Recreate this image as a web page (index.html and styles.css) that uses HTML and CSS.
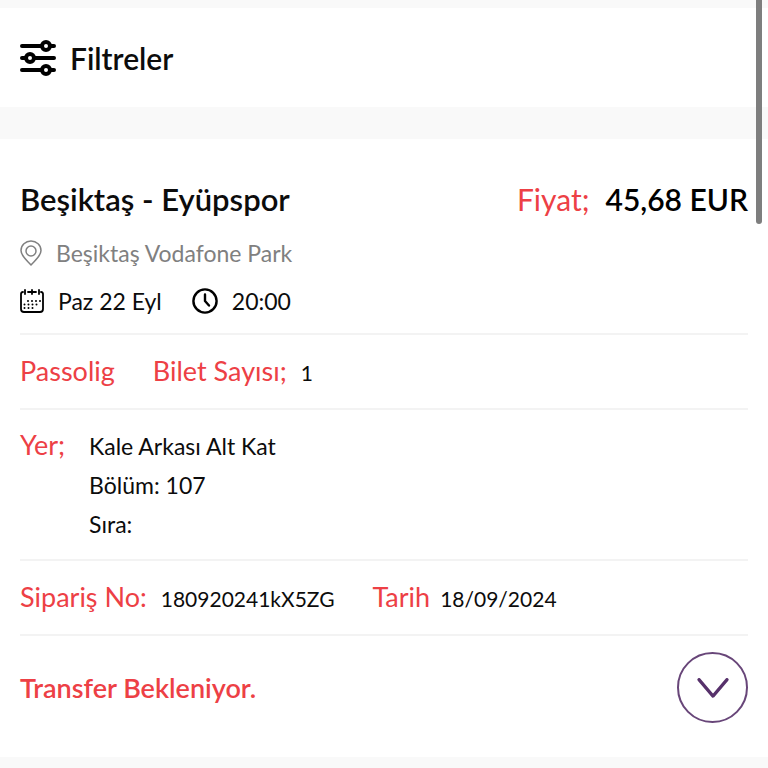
FILE: index.html
```html
<!DOCTYPE html>
<html lang="tr">
<head>
  <meta charset="utf-8">
  <meta name="viewport" content="width=device-width, initial-scale=1">
  <title>Biletlerim</title>
  <link rel="stylesheet" href="styles.css">
</head>
<body>
  <header class="filter-bar">
    <button type="button" class="filter-button">
      <svg class="filter-icon" viewBox="0 0 36 36" fill="none" stroke="#000" stroke-width="4" stroke-linecap="round">
        <path d="M2 6h20M31 6h3M2 18h3M15 18h19M2 30h20M31 30h3"/>
        <circle cx="26" cy="6" r="4"/>
        <circle cx="10" cy="18" r="4"/>
        <circle cx="26" cy="30" r="4"/>
      </svg>
      Filtreler
    </button>
  </header>

  <main class="ticket">
    <div class="ticket-header">
      <h2 class="ticket-title">Beşiktaş - Eyüpspor</h2>
      <div class="ticket-price">
        <span class="price-label">Fiyat;</span>
        <span class="price-value">45,68 EUR</span>
      </div>
    </div>

    <div class="ticket-venue">
      <svg class="venue-icon" viewBox="0 0 22 26" fill="none" stroke="#808080" stroke-width="1.5" stroke-linejoin="round">
        <path d="M11 25C7 20.500 1 16 1 10.500a10 9.500 0 0 1 20 0C21 16 15 20.500 11 25z"/>
        <circle cx="11" cy="11" r="5"/>
      </svg>
      Beşiktaş Vodafone Park
    </div>

    <div class="ticket-date">
      <svg class="date-icon" viewBox="0 0 24 24" fill="none" stroke="#000" stroke-width="1.8" stroke-linecap="round">
        <path d="M3 3C1.500 3 1 4 1 5v15c0 2 1 3 3 3h16c2 0 3-1 3-3V5c0-1-.5-2-2-2M8 3h8M5 1v4M12 1v4M19 1v4"/>
        <path stroke-width="2" stroke-dasharray="0 4" d="M8 12h13M4.500 15.500h16M4.500 19h12"/>
      </svg>
      <span>Paz 22 Eyl</span>
      <svg class="clock-icon" viewBox="0 0 26 26" fill="none" stroke="#000" stroke-width="2.400" stroke-linecap="round" stroke-linejoin="round">
        <circle cx="13" cy="13" r="11.600"/>
        <path d="M13 6.500V13l4 4.500"/>
      </svg>
      <span>20:00</span>
    </div>

    <div class="ticket-row">
      <span class="row-label passolig">Passolig</span>
      <span class="row-label">Bilet Sayısı;</span>
      <span class="row-value">1</span>
    </div>

    <div class="ticket-row ticket-place">
      <span class="row-label">Yer;</span>
      <div class="place-lines">
        <div>Kale Arkası Alt Kat</div>
        <div>Bölüm: 107</div>
        <div>Sıra:</div>
      </div>
    </div>

    <div class="ticket-row">
      <span class="row-label">Sipariş No:</span>
      <span class="row-value order-number">180920241kX5ZG</span>
      <span class="row-label date-label">Tarih</span>
      <span class="row-value">18/09/2024</span>
    </div>

    <div class="ticket-footer">
      <span class="ticket-status">Transfer Bekleniyor.</span>
      <button type="button" class="expand-button" aria-label="Detayları göster">
        <svg class="expand-icon" viewBox="0 0 32 20" fill="none" stroke="#57316b" stroke-width="3.200" stroke-linecap="round" stroke-linejoin="round">
          <path d="M2 1.600l14 16.500 14-16.500"/>
        </svg>
      </button>
    </div>
  </main>

  <div class="scroll-thumb"></div>
</body>
</html>
```

FILE: styles.css
```css
* {
  box-sizing: border-box;
}

body {
  margin: 0;
  padding: 8px 0;
  background-color: #f9f9f9;
  color: #0c0c0c;
  font-family: Lato, "Open Sans", sans-serif;
  font-size: 23px;
}

/* Filter bar */
.filter-bar {
  display: flex;
  align-items: center;
  padding: 30px 20px 29px;
  margin-bottom: 32px;
  background-color: #fff;
}

.filter-button {
  display: flex;
  align-items: center;
  gap: 14px;
  padding: 0;
  border: none;
  background: none;
  color: #0c0c0c;
  font-family: inherit;
  font-size: 30px;
  font-weight: 600;
  line-height: 40px;
  cursor: pointer;
}

.filter-icon {
  width: 36px;
  height: 36px;
}

/* Ticket card */
.ticket {
  padding: 40px 20px 34px;
  background-color: #fff;
}

.ticket-header {
  display: flex;
  justify-content: space-between;
  align-items: center;
  line-height: 40px;
}

.ticket-title {
  margin: 0;
  font-size: 31px;
  font-weight: 600;
}

.ticket-price {
  display: flex;
  gap: 16px;
  font-size: 30px;
}

.price-label {
  color: #ed4045;
}

.price-value {
  color: #000;
  font-weight: 600;
}

.ticket-venue {
  display: flex;
  align-items: center;
  gap: 14px;
  margin-top: 18px;
  color: #808080;
  line-height: 32px;
}

.venue-icon {
  width: 22px;
  height: 26px;
}

.ticket-date {
  display: flex;
  align-items: center;
  gap: 14px;
  padding: 16px 0;
  line-height: 32px;
}

.date-icon {
  width: 24px;
  height: 24px;
}

.clock-icon {
  width: 26px;
  height: 26px;
  margin-left: 16px;
}

/* Rows between the divider lines */
.ticket-row {
  display: flex;
  align-items: baseline;
  gap: 14px;
  padding: 19px 0;
  border-top: 2px solid #f3f3f3;
  line-height: 33px;
}

.row-label {
  color: #ed4045;
  font-size: 27px;
}

.row-value {
  font-size: 21px;
}

.passolig {
  margin-right: 24px;
}

.ticket-place {
  gap: 24px;
  padding: 15px 0;
  line-height: 39px;
}

.order-number {
  margin-right: 24px;
}

.date-label {
  margin-right: -4px;
}

/* Status and expand button */
.ticket-footer {
  display: flex;
  justify-content: space-between;
  align-items: center;
  padding-top: 16px;
  border-top: 2px solid #f3f3f3;
}

.ticket-status {
  color: #ed4045;
  font-size: 27px;
  font-weight: 600;
}

.expand-button {
  display: flex;
  align-items: center;
  justify-content: center;
  width: 71px;
  height: 71px;
  padding: 0;
  border: 2px solid #684679;
  border-radius: 50%;
  background: none;
  cursor: pointer;
}

.expand-icon {
  width: 32px;
  height: 20px;
}

/* Overlay scrollbar */
.scroll-thumb {
  position: fixed;
  top: -4px;
  right: 6px;
  width: 6px;
  height: 228px;
  border-radius: 3px;
  background-color: #7e7e7e;
}
```
